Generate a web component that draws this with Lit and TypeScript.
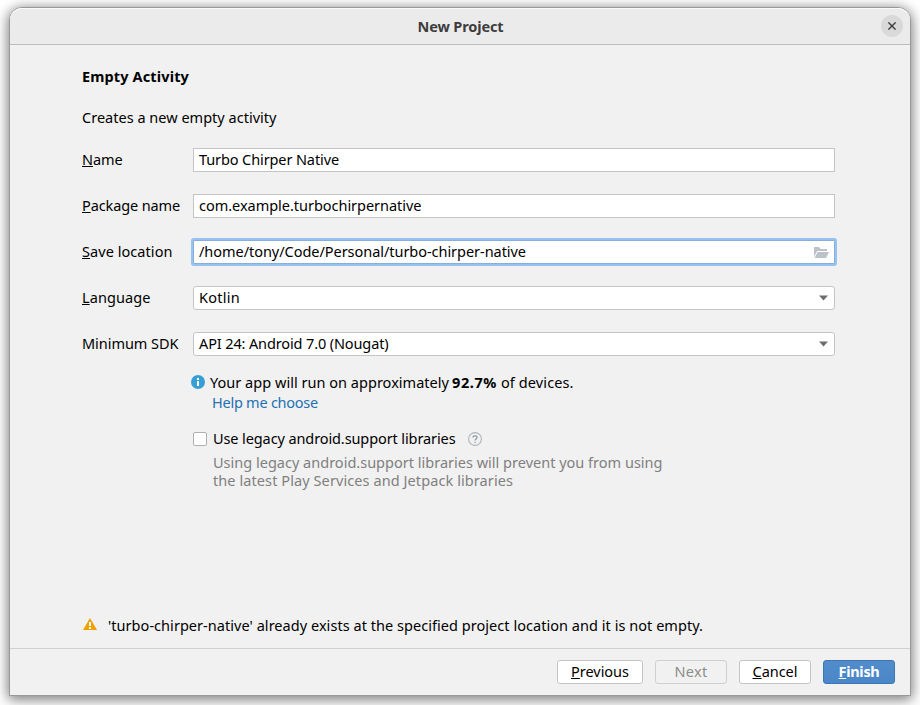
import { LitElement, html, css, svg } from "lit";
import { customElement, property } from "lit/decorators.js";

/** Single line of text tracked so that it spans a given width. */
@customElement("ui-text")
class UiText extends LitElement {
  static styles = css`
    :host { display: block; width: max-content; white-space: pre; flex: none; }
    .text { display: block; width: max-content; margin: -1px 0 1px; }
    u { text-decoration: underline; text-decoration-thickness: 1px; text-underline-offset: 1px; text-decoration-skip-ink: none; }
  `;
  @property() text = "";
  @property({ type: Number }) span = 0;
  @property({ type: Boolean }) mnemonic = false;

  render() {
    return html`<span class="text">${this.mnemonic ? html`<u>${this.text[0]}</u>${this.text.slice(1)}` : this.text}</span>`;
  }
  updated() {
    const el = this.renderRoot.querySelector("span") as HTMLElement;
    el.style.letterSpacing = "0px";
    const natural = el.getBoundingClientRect().width;
    el.style.letterSpacing = (this.span - natural) / this.text.length + "px";
  }
}

const folder = svg`<path fill="#bcc2c7" d="M0 10V0h5l1.5 2H13v2H3.2L0 10z"/><path fill="#bcc2c7" d="M3.6 5H15l-3 6H0.6z"/>`;

@customElement("app-root")
class AppRoot extends LitElement {
  static styles = css`
    :host {
      display: block; box-sizing: border-box; width: 920px; height: 705px; padding: 7px 9px 9px;
      overflow: hidden; background: #fff; color: #000;
      font: 14.5px/20px "Noto Sans", "Open Sans", sans-serif;
    }
    * { box-sizing: border-box; }
    svg { display: block; flex: none; }
    .window {
      display: flex; flex-direction: column; width: 902px; height: 689px; border: 1px solid #999;
      border-radius: 13px 13px 0 0; background: #f1f1f1;
      box-shadow: 0 3px 14px 1px rgba(0,0,0,.46), 0 0 10px rgba(0,0,0,.12);
    }
    header {
      display: grid; grid-template-columns: 1fr auto 1fr; align-items: center; height: 37px;
      padding: 0 7px 0 8px; border-bottom: 1px solid #bdbdbd; border-radius: 12px 12px 0 0;
      background: #ebebeb; box-shadow: inset 0 1px #fafafa; color: #3d3d3d; font-weight: 700;
    }
    header ui-text { grid-column: 2; margin-top: 2px; }
    .close { justify-self: end; display: grid; place-items: center; width: 22px; height: 22px; border-radius: 50%; background: #d9d9d9; }
    main { flex: 1; display: flex; flex-direction: column; padding: 22px 75px 0 72px; }
    .heading { font-weight: 700; height: 20px; }
    .intro { height: 20px; margin: 21px 0 20px; }
    .form { display: grid; row-gap: 22px; }
    .row { display: grid; grid-template-columns: 111px 642px; align-items: center; height: 24px; }
    .field { display: flex; align-items: center; justify-content: space-between; height: 24px; padding: 0 5px; border: 1px solid #c4c4c4; background: #fff; }
    .select { border-radius: 3px; padding-right: 6px; }
    .focus { border-color: #87afda; border-radius: 1px; box-shadow: 0 0 0 2px #97c3f3; }
    .info { display: flex; align-items: center; height: 20px; margin: 17px 0 0 109px; }
    .info svg { margin: 0 5px 2px 0; }
    .strong { font-weight: 700; margin: 0 4px 0 3px; }
    .link { height: 20px; margin-left: 130px; color: #2470b3; }
    .check { display: flex; align-items: center; height: 20px; margin: 16px 0 0 111px; }
    .box { width: 14px; height: 14px; margin-right: 6px; border: 1px solid #b0b0b0; border-radius: 2px; background: #fff; }
    .check svg { margin-left: 12px; }
    .note { display: grid; margin: 5px 0 0 131px; line-height: 18px; color: #808080; }
    .warning { display: flex; align-items: center; height: 20px; margin: auto 0 12px 0; }
    .warning svg { margin: 0 11px 4px 1px; }
    footer { display: flex; align-items: center; justify-content: flex-end; gap: 12px; height: 47px; padding-right: 15px; border-top: 1px solid #d1d1d1; }
    .button { display: grid; place-items: center; width: 72px; height: 24px; border: 1px solid #c4c4c4; border-radius: 3px; background: #fff; }
    .wide { width: 86px; }
    .disabled { border-color: #cfcfcf; background: #f1f1f1; color: #8c8c8c; }
    .primary { border-color: #3d75b2; background: linear-gradient(#528ccb, #4a87c8); color: #fff; font-weight: 700; }
  `;

  private line(text: string, span: number, mnemonic = false) {
    return html`<ui-text .text=${text} .span=${span} .mnemonic=${mnemonic}></ui-text>`;
  }
  private row(label: string, lw: number, value: string, vw: number, kind = "") {
    return html`<div class="row">
      ${this.line(label, lw, label !== "Minimum SDK")}
      <div class="field ${kind}">
        ${this.line(value, vw)}
        ${kind === "select" ? html`<svg width="9" height="6" viewBox="0 0 9 6"><path fill="#6e6e6e" d="M0 .5h9L4.5 5.5z"/></svg>` : ""}
        ${kind === "focus" ? html`<svg width="15" height="11" viewBox="0 0 15 11">${folder}</svg>` : ""}
      </div>
    </div>`;
  }

  render() {
    return html`<div class="window">
      <header>
        ${this.line("New Project", 86)}
        <span class="close"><svg width="8" height="8" viewBox="0 0 8 8"><path d="M.4.4l7.2 7.2M7.6.4L.4 7.6" stroke="#3d3d3d" stroke-width="1.4"/></svg></span>
      </header>
      <main>
        <div class="heading">${this.line("Empty Activity", 107)}</div>
        <div class="intro">${this.line("Creates a new empty activity", 194.5)}</div>
        <div class="form">
          ${this.row("Name", 40.5, "Turbo Chirper Native", 140)}
          ${this.row("Package name", 98, "com.example.turbochirpernative", 222.5)}
          ${this.row("Save location", 90.5, "/home/tony/Code/Personal/turbo-chirper-native", 327, "focus")}
          ${this.row("Language", 68.5, "Kotlin", 41, "select")}
          ${this.row("Minimum SDK", 96.5, "API 24: Android 7.0 (Nougat)", 189.5, "select")}
        </div>
        <div class="info">
          <svg width="14" height="14" viewBox="0 0 14 14"><circle cx="7" cy="7" r="7" fill="#389fd6"/><path fill="#fff" d="M6 3h2v2H6zM6 6h2v5H6z"/></svg>
          ${this.line("Your app will run on approximately", 239)}
          <span class="strong">${this.line("92.7%", 45)}</span>
          ${this.line("of devices.", 72.5)}
        </div>
        <div class="link">${this.line("Help me choose", 106)}</div>
        <div class="check">
          <span class="box"></span>
          ${this.line("Use legacy android.support libraries", 242.5)}
          <svg width="14" height="14" viewBox="0 0 14 14" fill="none"><circle cx="7" cy="7" r="6.4" stroke="#aeb5ba" stroke-width="1.1"/><path d="M5 5.6C5 3.2 9 3.2 9 5.6 9 7 7 6.9 7 8.6M7 9.7v1.3" stroke="#8d959b" stroke-width="1.2"/></svg>
        </div>
        <div class="note">
          ${this.line("Using legacy android.support libraries will prevent you from using", 449.5)}
          ${this.line("the latest Play Services and Jetpack libraries", 300)}
        </div>
        <div class="warning">
          <svg width="14" height="12" viewBox="0 0 14 12"><path fill="#eda200" d="M7 0l7 12H0z"/><path fill="#fff" d="M6 4h2v4H6zM6 9h2v2H6z"/></svg>
          ${this.line("'turbo-chirper-native' already exists at the specified project location and it is not empty.", 595)}
        </div>
      </main>
      <footer>
        <div class="button wide">${this.line("Previous", 58, true)}</div>
        <div class="button disabled">${this.line("Next", 33)}</div>
        <div class="button">${this.line("Cancel", 45, true)}</div>
        <div class="button primary">${this.line("Finish", 41, true)}</div>
      </footer>
    </div>`;
  }
}
